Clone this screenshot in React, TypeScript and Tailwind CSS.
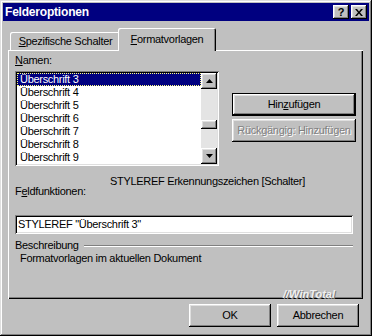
const raised =
  "shadow-[inset_-1px_-1px_#000,inset_1px_1px_#fff,inset_-2px_-2px_#808080,inset_2px_2px_#dfdfdf]";
const sunken =
  "shadow-[inset_1px_1px_#808080,inset_-1px_-1px_#fff,inset_2px_2px_#000,inset_-2px_-2px_#dfdfdf]";

const items = [
  "Überschrift 3",
  "Überschrift 4",
  "Überschrift 5",
  "Überschrift 6",
  "Überschrift 7",
  "Überschrift 8",
  "Überschrift 9",
];

function Arrow({ down }: { down?: boolean }) {
  return (
    <svg width="7" height="4" viewBox="0 0 7 4">
      <path d={down ? "M0 0h7L3.5 4z" : "M3.5 0L7 4H0z"} fill="#000" />
    </svg>
  );
}

function ScrollBtn({ down }: { down?: boolean }) {
  return (
    <div className={`h-[16px] w-[16px] bg-[#c0c0c0] flex items-center justify-center ${raised}`}>
      <Arrow down={down} />
    </div>
  );
}

export default function App() {
  return (
    <div className="relative flex h-[336px] w-[372px] flex-col bg-[#c0c0c0] p-[3px] font-['Liberation_Sans',Arial,sans-serif] text-[11px] leading-[13px] tracking-[-0.3px] text-black shadow-[inset_-1px_-1px_#000,inset_1px_1px_#dfdfdf,inset_-2px_-2px_#808080,inset_2px_2px_#fff]">
      {/* title bar */}
      <div className="flex h-[18px] items-center justify-between bg-[#000080] pl-[2px] pr-[2px]">
        <span className="text-[12px] font-bold tracking-[-0.2px] text-white">Felderoptionen</span>
        <div className="flex gap-[2px]">
          <div className={`flex h-[14px] w-[16px] items-center justify-center bg-[#c0c0c0] text-[11px] font-bold leading-none ${raised}`}>
            ?
          </div>
          <div className={`flex h-[14px] w-[16px] items-center justify-center bg-[#c0c0c0] ${raised}`}>
            <svg width="8" height="7" viewBox="0 0 8 7">
              <path d="M0 0h2l2 2.5L6 0h2L5 3.5 8 7H6L4 4.5 2 7H0l3-3.5z" fill="#000" />
            </svg>
          </div>
        </div>
      </div>

      <div className="ml-[5px] mt-[7px] flex w-[355px] flex-col">
        {/* tabs */}
        <div className="flex h-[22px] items-end">
          <div className="ml-[2px] flex h-[18px] w-[111px] items-center justify-center rounded-t-[2px] shadow-[inset_1px_1px_#fff,inset_-1px_0_#000,inset_-2px_0_#808080]">
            <span className="mt-[1px]">
              <u>S</u>pezifische Schalter
            </span>
          </div>
          <div className="relative z-10 -mb-px -ml-[3px] flex h-[23px] w-[98px] items-start justify-center rounded-t-[2px] bg-[#c0c0c0] pt-[5px] shadow-[inset_1px_1px_#fff,inset_-1px_0_#000,inset_-2px_0_#808080]">
            <span>
              <u>F</u>ormatvorlagen
            </span>
          </div>
        </div>

        {/* panel */}
        <div className="flex h-[249px] flex-col pl-[7px] pt-[4px] shadow-[inset_1px_1px_#fff,inset_-1px_-1px_#000,inset_-2px_-2px_#808080]">
          <div>
            <u>N</u>amen:
          </div>
          <div className="mt-[4px] flex">
            <div className={`flex h-[95px] w-[204px] bg-white p-[2px] ${sunken}`}>
              <div className="flex flex-1 flex-col">
                {items.map((t, i) => (
                  <div
                    key={t}
                    className={
                      i === 0
                        ? "h-[13px] border border-dotted border-[#ffff80] bg-[#000080] pl-[2px] leading-[11px] text-white"
                        : "h-[13px] pl-[3px]"
                    }
                  >
                    {t}
                  </div>
                ))}
              </div>
              <div className="flex w-[16px] flex-col bg-[#e4e4e4]">
                <ScrollBtn />
                <div className="h-[31px]" />
                <div className={`h-[9px] w-[16px] bg-[#c0c0c0] ${raised}`} />
                <div className="flex-1" />
                <ScrollBtn down />
              </div>
            </div>
            <div className="ml-[13px] mt-[22px] flex w-[124px] flex-col gap-[3px]">
              <div className="h-[23px] border border-black">
                <div className={`flex h-full items-center justify-center ${raised}`}>
                  <span>
                    Hin<u>z</u>ufügen
                  </span>
                </div>
              </div>
              <div className={`flex h-[23px] items-center justify-center text-[#808080] [text-shadow:1px_1px_0_#fff] ${raised}`}>
                Rückgängig: Hinzufügen
              </div>
            </div>
          </div>

          <div className="flex">
            <div className="mt-[19px] w-[95px]">
              F<u>e</u>ldfunktionen:
            </div>
            <div className="mt-[9px]">STYLEREF Erkennungszeichen [Schalter]</div>
          </div>

          <div className={`mt-[17px] flex h-[19px] w-[338px] items-center bg-white pl-[3px] ${sunken}`}>
            STYLEREF "Überschrift 3"
          </div>

          <div className="mt-[5px] flex w-[338px] items-center">
            <span>Beschreibung</span>
            <div className="ml-[5px] h-[2px] flex-1 border-t border-b border-t-[#808080] border-b-white" />
          </div>
          <div className="pl-[5px]">Formatvorlagen im aktuellen Dokument</div>
        </div>
      </div>

      {/* bottom buttons */}
      <div className="mt-[5px] flex justify-end gap-[6px] pr-[10px]">
        <div className={`flex h-[23px] w-[82px] items-center justify-center ${raised}`}>OK</div>
        <div className={`flex h-[23px] w-[82px] items-center justify-center ${raised}`}>Abbrechen</div>
      </div>

      <div className="absolute left-[283px] top-[288px] text-[11px] font-black italic leading-[12px] tracking-[0px] text-[#f0f0f0] [text-shadow:1px_1px_0_#7a7a7a]">
        //WinTotal
      </div>
    </div>
  );
}
